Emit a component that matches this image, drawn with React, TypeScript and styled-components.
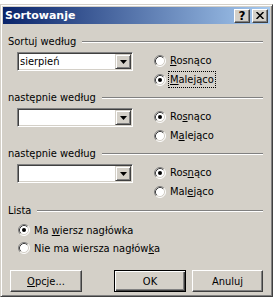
import styled, { createGlobalStyle } from 'styled-components';

const GlobalStyle = createGlobalStyle`
  html, body {
    margin: 0;
    padding: 0;
  }
  body {
    width: 273px;
    height: 303px;
    overflow: hidden;
    background: #ffffff;
    font-family: "DejaVu Sans Condensed", "DejaVu Sans", "Liberation Sans", sans-serif;
    font-size: 11px;
    color: #000;
  }
`;

const Window = styled.div`
  margin-top: 4px;
  width: 273px;
  height: 293px;
  box-sizing: border-box;
  background: #d4d0c8;
  border: 1px solid;
  border-color: #d4d0c8 #404040 #404040 #d4d0c8;
  box-shadow: inset 1px 1px #ffffff, inset -1px -1px #808080;
  padding: 2px;
  display: flex;
  flex-direction: column;
`;

const TitleBar = styled.div`
  height: 17px;
  display: flex;
  align-items: center;
  padding: 0 2px;
  background: linear-gradient(to right, #0a246a, #a6caf0);
`;

const Title = styled.div`
  flex: 1;
  color: #fff;
  font-family: "DejaVu Sans", sans-serif;
  font-weight: bold;
  font-size: 11px;
`;

const TitleButtons = styled.div`
  display: flex;
  gap: 2px;
`;

const TitleButton = styled.div`
  width: 16px;
  height: 14px;
  box-sizing: border-box;
  background: #d4d0c8;
  border: 1px solid;
  border-color: #ffffff #404040 #404040 #ffffff;
  box-shadow: inset -1px -1px #808080;
  display: flex;
  align-items: center;
  justify-content: center;
  font-family: "DejaVu Sans", sans-serif;
  font-weight: bold;
  font-size: 12px;
  line-height: 1;
`;

const Body = styled.div`
  flex: 1;
  margin-top: 1px;
  padding: 9px 7px 1px 5px;
  display: flex;
  flex-direction: column;
`;

const Header = styled.div<{ $gap?: number }>`
  display: flex;
  align-items: center;
  height: 14px;
  margin-top: ${(p) => p.$gap ?? 0}px;
  white-space: nowrap;
`;

const Rule = styled.div`
  flex: 1;
  height: 0;
  margin: 2px 0 0 6px;
  border-top: 1px solid #808080;
  border-bottom: 1px solid #ffffff;
`;

const Row = styled.div`
  display: flex;
  margin-top: 3px;
  margin-bottom: 1px;
`;

const Combo = styled.div`
  margin: 1px 0 0 9px;
  width: 116px;
  height: 19px;
  box-sizing: border-box;
  background: #fff;
  border: 1px solid;
  border-color: #808080 #ffffff #ffffff #808080;
  box-shadow: inset 1px 1px #404040, inset -1px -1px #d4d0c8;
  padding: 1px;
  display: flex;
`;

const ComboValue = styled.div`
  flex: 1;
  padding-left: 1px;
  display: flex;
  align-items: center;
`;

const ArrowButton = styled.div`
  width: 16px;
  box-sizing: border-box;
  background: #d4d0c8;
  border: 1px solid;
  border-color: #d4d0c8 #404040 #404040 #d4d0c8;
  box-shadow: inset 1px 1px #ffffff, inset -1px -1px #808080;
  display: flex;
  align-items: center;
  justify-content: center;
`;

const RadioColumn = styled.div<{ $indent: number; $top?: number }>`
  display: flex;
  flex-direction: column;
  margin-left: ${(p) => p.$indent}px;
  margin-top: ${(p) => p.$top ?? 0}px;
`;

const RadioRow = styled.label<{ $h: number }>`
  display: flex;
  align-items: center;
  height: ${(p) => p.$h}px;
  white-space: nowrap;
`;

const RadioText = styled.span<{ $focused?: boolean }>`
  margin-left: 2px;
  padding: 1px;
  line-height: 13px;
  border: 1px dotted ${(p) => (p.$focused ? '#000' : 'transparent')};
`;

const ButtonRow = styled.div`
  display: flex;
  margin-top: 13px;
`;

const Button = styled.div<{ $default?: boolean; $w: number; $ml?: string }>`
  width: ${(p) => p.$w}px;
  height: 22px;
  box-sizing: border-box;
  margin-left: ${(p) => p.$ml ?? '0'};
  display: flex;
  align-items: center;
  justify-content: center;
  background: #d4d0c8;
  border: 1px solid;
  border-color: ${(p) => (p.$default ? '#000' : '#ffffff #404040 #404040 #ffffff')};
  box-shadow: ${(p) =>
    p.$default
      ? 'inset 1px 1px #ffffff, inset -1px -1px #404040, inset -2px -2px #808080'
      : 'inset -1px -1px #808080'};
`;

function RadioDot({ checked }: { checked?: boolean }) {
  return (
    <svg width="12" height="12" viewBox="0 0 12 12">
      <circle cx="6" cy="6" r="5" fill="#fff" />
      <path d="M2.11 9.89 A5.5 5.5 0 0 1 9.89 2.11" fill="none" stroke="#808080" />
      <path d="M9.89 2.11 A5.5 5.5 0 0 1 2.11 9.89" fill="none" stroke="#ffffff" />
      <path d="M2.82 9.18 A4.5 4.5 0 0 1 9.18 2.82" fill="none" stroke="#404040" />
      <path d="M9.18 2.82 A4.5 4.5 0 0 1 2.82 9.18" fill="none" stroke="#d4d0c8" />
      {checked && <circle cx="6" cy="6" r="2" fill="#000" />}
    </svg>
  );
}

function Radio({
  checked,
  focused,
  h,
  children,
}: {
  checked?: boolean;
  focused?: boolean;
  h: number;
  children: React.ReactNode;
}) {
  return (
    <RadioRow $h={h}>
      <RadioDot checked={checked} />
      <RadioText $focused={focused}>{children}</RadioText>
    </RadioRow>
  );
}

function ComboBox({ value }: { value?: string }) {
  return (
    <Combo>
      <ComboValue>{value}</ComboValue>
      <ArrowButton>
        <svg width="7" height="4" viewBox="0 0 7 4">
          <path d="M0 0 H7 L3.5 4 Z" fill="#000" />
        </svg>
      </ArrowButton>
    </Combo>
  );
}

const groups = [
  {
    label: 'Sortuj według',
    value: 'sierpień',
    asc: <><u>R</u>osnąco</>,
    desc: <><u>M</u>alejąco</>,
    descChecked: true,
  },
  {
    label: 'następnie według',
    value: '',
    asc: <>Ro<u>s</u>nąco</>,
    desc: <>M<u>a</u>lejąco</>,
    descChecked: false,
  },
  {
    label: 'następnie według',
    value: '',
    asc: <>Ros<u>n</u>ąco</>,
    desc: <>Mal<u>e</u>jąco</>,
    descChecked: false,
  },
];

export default function App() {
  return (
    <>
      <GlobalStyle />
      <Window>
        <TitleBar>
          <Title>Sortowanje</Title>
          <TitleButtons>
            <TitleButton>?</TitleButton>
            <TitleButton>
              <svg width="8" height="7" viewBox="0 0 8 7">
                <path d="M0.5 0 L7.5 7 M7.5 0 L0.5 7" stroke="#000" strokeWidth="1.5" />
              </svg>
            </TitleButton>
          </TitleButtons>
        </TitleBar>
        <Body>
          {groups.map((g, i) => (
            <div key={i}>
              <Header>
                {g.label}
                <Rule />
              </Header>
              <Row>
                <ComboBox value={g.value} />
                <RadioColumn $indent={21}>
                  <Radio h={19} checked={!g.descChecked}>{g.asc}</Radio>
                  <Radio h={19} checked={g.descChecked} focused={i === 0}>
                    {g.desc}
                  </Radio>
                </RadioColumn>
              </Row>
            </div>
          ))}
          <Header $gap={1}>
            Lista
            <Rule />
          </Header>
          <RadioColumn $indent={10} $top={4}>
            <Radio h={18} checked>
              Ma <u>w</u>iersz nagłówka
            </Radio>
            <Radio h={18}>
              Nie ma wiersza nagłów<u>k</u>a
            </Radio>
          </RadioColumn>
          <ButtonRow>
            <Button $w={72} $ml="2px">
              <u>O</u>pcje...
            </Button>
            <Button $w={72} $ml="auto" $default>
              OK
            </Button>
            <Button $w={71} $ml="6px">
              Anuluj
            </Button>
          </ButtonRow>
        </Body>
      </Window>
    </>
  );
}
